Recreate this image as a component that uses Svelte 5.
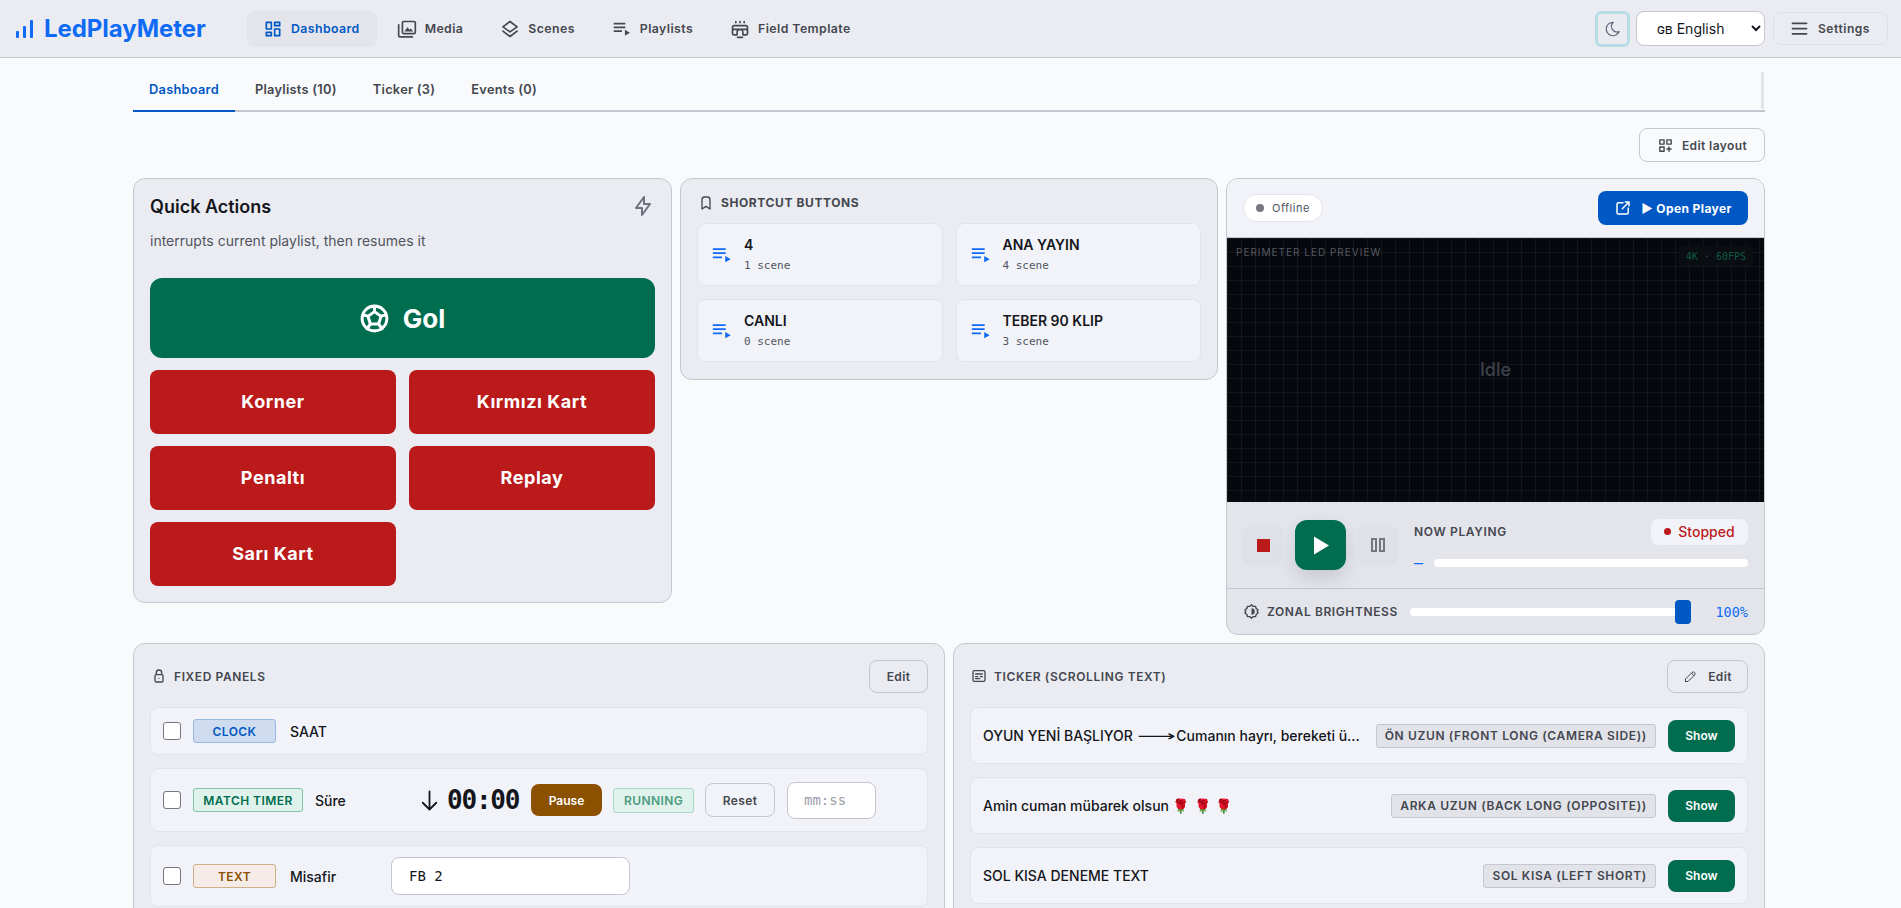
<script>
  const nav = [
    { label: 'Dashboard', icon: 'dash', active: true },
    { label: 'Media', icon: 'media' },
    { label: 'Scenes', icon: 'scenes' },
    { label: 'Playlists', icon: 'list' },
    { label: 'Field Template', icon: 'field' }
  ];
  const tabs = ['Dashboard', 'Playlists (10)', 'Ticker (3)', 'Events (0)'];
  const shortcuts = [
    { t: '4', s: '1 scene' },
    { t: 'ANA YAYIN', s: '4 scene' },
    { t: 'CANLI', s: '0 scene' },
    { t: 'TEBER 90 KLIP', s: '3 scene' }
  ];
  const reds = ['Korner', 'Kırmızı Kart', 'Penaltı', 'Replay', 'Sarı Kart'];
  const tickers = [
    { t: 'OYUN YENİ BAŞLIYOR', arrow: '⟶', rest: 'Cumanın hayrı, bereketi üzerimize olsun, hayırlı cumalar dileriz', b: 'ÖN UZUN (FRONT LONG (CAMERA SIDE))' },
    { t: 'Amin cuman mübarek olsun 🌹 🌹 🌹', b: 'ARKA UZUN (BACK LONG (OPPOSITE))' },
    { t: 'SOL KISA DENEME TEXT', b: 'SOL KISA (LEFT SHORT)' }
  ];
</script>

{#snippet icon(name)}
  <svg class="ic" viewBox="0 0 24 24" fill="none" stroke="currentColor" stroke-width="2" stroke-linecap="round" stroke-linejoin="round">
    {#if name === 'dash'}
      <path d="M4 4h6v8h-6z M4 16h6v4h-6z M14 12h6v8h-6z M14 4h6v4h-6z" />
    {:else if name === 'media'}
      <path d="M6.500 4.500a1.500 1.500 0 0 1 1.500 -1.500h12.500a1.500 1.500 0 0 1 1.500 1.500v11.500a1.500 1.500 0 0 1 -1.500 1.500h-12.500a1.500 1.500 0 0 1 -1.500 -1.500z" />
      <path d="M2 7v13a1.500 1.500 0 0 0 1.500 1.500h15" />
      <path fill="currentColor" stroke="none" d="M9 15l3.500 -5l2.500 3l1.500 -1.500l3 3.500z" />
    {:else if name === 'scenes'}
      <path d="M12 3l8.500 6.500l-8.500 6l-8.500 -6z M3.500 14.500l8.500 6.500l8.500 -6.500" />
    {:else if name === 'list'}
      <path fill="currentColor" stroke="none" d="M2 4.500h14v2H2z M2 9h14v2H2z M2 13.500h10v2H2z M15.500 13v7l6 -3.500z" />
    {:else if name === 'field'}
      <path d="M5 8h14a2 2 0 0 1 2 2v7a2 2 0 0 1 -2 2h-3.500v-3a3.500 3.500 0 0 0 -7 0v3h-3.500a2 2 0 0 1 -2 -2v-7a2 2 0 0 1 2 -2z M3 12.500h18 M7 3v1.500 M12 3v1.500 M17 3v1.500 M9 22h6" />
    {:else if name === 'moon'}
      <path d="M12 3c.132 0 .263 0 .393 0a7.500 7.500 0 0 0 7.920 12.446a9 9 0 1 1 -8.313 -12.454z" />
    {:else if name === 'menu'}
      <path d="M4 6h16 M4 12h16 M4 18h16" />
    {:else if name === 'layout'}
      <path d="M4 4h6v6h-6z M14 4h6v6h-6z M4 14h6v6h-6z M14 17h6 M17 14v6" />
    {:else if name === 'bolt'}
      <path d="M13 3v7h6l-8 11v-7h-6l8 -11" />
    {:else if name === 'ball'}
      <path d="M12 12m-9 0a9 9 0 1 0 18 0a9 9 0 1 0 -18 0 M12 7l4.760 3.450l-1.760 5.550h-6l-1.760 -5.550z M12 7v-4 M16.760 10.450l3.730 -1.350 M15 16l2.500 3.500 M9 16l-2.500 3.500 M7.240 10.450l-3.730 -1.350" />
    {:else if name === 'bookmark'}
      <path d="M18 7v14l-6 -4l-6 4v-14a4 4 0 0 1 4 -4h4a4 4 0 0 1 4 4z" />
    {:else if name === 'external'}
      <path d="M12 5h-6a2 2 0 0 0 -2 2v11a2 2 0 0 0 2 2h11a2 2 0 0 0 2 -2v-6 M11 13l9 -9 M15 4h5v5" />
    {:else if name === 'bright'}
      <path d="M12 2.500l2.500 2.300h3.200l.9 3l2.600 2.200l-1.100 2l1.100 2l-2.600 2.200l-.9 3h-3.200l-2.500 2.300l-2.500 -2.300h-3.200l-.9 -3l-2.600 -2.200l1.100 -2l-1.100 -2l2.600 -2.200l.9 -3h3.200z" />
      <path fill="currentColor" stroke="none" d="M12 7.500a4.500 4.500 0 0 1 0 9z" />
    {:else if name === 'lock'}
      <path d="M6 12a2 2 0 0 1 2 -2h8a2 2 0 0 1 2 2v7a2 2 0 0 1 -2 2h-8a2 2 0 0 1 -2 -2z M8 10v-3a4 4 0 1 1 8 0v3 M12 15.500v.01" />
    {:else if name === 'ticker'}
      <path d="M3 6a2 2 0 0 1 2 -2h14a2 2 0 0 1 2 2v12a2 2 0 0 1 -2 2h-14a2 2 0 0 1 -2 -2z M7 9h10 M7 13h3 M14 13h3 M7 16h6" />
    {:else if name === 'pencil'}
      <path d="M4 20h4l10.500 -10.500a2.800 2.800 0 0 0 -4 -4l-10.500 10.500v4 M13.500 6.500l4 4" />
    {:else if name === 'down'}
      <path d="M12 4v16 M6 14l6 6l6 -6" />
    {/if}
  </svg>
{/snippet}

<div class="app">
  <header class="top">
    <div class="logo">
      <svg class="logo-ic" viewBox="0 0 20 20" fill="currentColor"><rect x="1" y="12" width="3" height="7" rx="1"/><rect x="8" y="7" width="3" height="12" rx="1"/><rect x="15" y="1" width="3" height="18" rx="1"/></svg>
      <span>LedPlayMeter</span>
    </div>
    <nav class="nav">
      {#each nav as n}
        <button class="nav-item" class:active={n.active}>{@render icon(n.icon)}<span>{n.label}</span></button>
      {/each}
    </nav>
    <div class="top-right">
      <button class="moon">{@render icon('moon')}</button>
      <select class="lang"><option>ɢʙ English</option></select>
      <button class="settings">{@render icon('menu')}<span>Settings</span></button>
    </div>
  </header>

  <main class="page">
    <div class="tabs">
      {#each tabs as t, i}
        <button class="tab" class:on={i === 0}>{t}</button>
      {/each}
      <span class="thumb"></span>
    </div>
    <div class="toolbar">
      <button class="btn-outline layout-btn">{@render icon('layout')}<span>Edit layout</span></button>
    </div>

    <div class="row-top">
      <section class="card quick">
        <div class="quick-head">
          <h2>Quick Actions</h2>
          {@render icon('bolt')}
        </div>
        <p class="quick-sub">interrupts current playlist, then resumes it</p>
        <button class="gol">{@render icon('ball')}<span>Gol</span></button>
        <div class="red-grid">
          {#each reds as r}
            <button class="red">{r}</button>
          {/each}
        </div>
      </section>

      <section class="card shortcuts">
        <div class="heading">{@render icon('bookmark')}<span>SHORTCUT BUTTONS</span></div>
        <div class="sc-grid">
          {#each shortcuts as s}
            <button class="sc">
              {@render icon('list')}
              <span class="sc-text"><b>{s.t}</b><small>{s.s}</small></span>
            </button>
          {/each}
        </div>
      </section>

      <section class="card player">
        <div class="p-head">
          <span class="offline"><i></i>Offline</span>
          <button class="open">{@render icon('external')}<span>▶ Open Player</span></button>
        </div>
        <div class="preview">
          <span class="pv-label">PERIMETER LED PREVIEW</span>
          <span class="pv-chip">4K · 60FPS</span>
          <span class="idle">Idle</span>
        </div>
        <div class="controls">
          <button class="ctl"><i class="stop"></i></button>
          <button class="play" aria-label="Play"><svg viewBox="0 0 16 18" fill="#fff"><path d="M1 0l15 9l-15 9z"/></svg></button>
          <button class="ctl"><i class="pause"></i><i class="pause"></i></button>
          <div class="now">
            <div class="now-top">
              <span class="now-label">NOW PLAYING</span>
              <span class="stopped"><i></i>Stopped</span>
            </div>
            <div class="now-bar"><span class="dash">—</span><span class="bar"></span></div>
          </div>
        </div>
        <div class="bright">
          {@render icon('bright')}
          <span class="br-label">ZONAL BRIGHTNESS</span>
          <span class="track"><i></i></span>
          <span class="pct">100%</span>
        </div>
      </section>
    </div>

    <div class="row-bottom">
      <section class="card panel">
        <div class="panel-head">
          <div class="heading">{@render icon('lock')}<span>FIXED PANELS</span></div>
          <button class="btn-outline edit"><span>Edit</span></button>
        </div>
        <div class="rows">
          <div class="rw r1">
            <span class="check"></span>
            <span class="badge clock">CLOCK</span>
            <span class="name">SAAT</span>
          </div>
          <div class="rw r2">
            <span class="check"></span>
            <span class="badge timer">MATCH TIMER</span>
            <span class="name">Süre</span>
            <span class="down">{@render icon('down')}</span>
            <span class="time">00:00</span>
            <button class="pausebtn">Pause</button>
            <span class="running">RUNNING</span>
            <button class="btn-outline reset">Reset</button>
            <span class="input mmss">mm:ss</span>
          </div>
          <div class="rw r3">
            <span class="check"></span>
            <span class="badge text">TEXT</span>
            <span class="name">Misafir</span>
            <span class="input fb">FB 2</span>
          </div>
        </div>
      </section>

      <section class="card panel tk-panel">
        <div class="panel-head">
          <div class="heading">{@render icon('ticker')}<span>TICKER (SCROLLING TEXT)</span></div>
          <button class="btn-outline edit">{@render icon('pencil')}<span>Edit</span></button>
        </div>
        <div class="rows">
          {#each tickers as t}
            <div class="rw tick">
              <span class="tk-text">{t.t}{#if t.arrow}{' '}<span class="arrow"><span>{t.arrow}</span></span>{' '}{t.rest}{/if}</span>
              <span class="tk-badge">{t.b}</span>
              <button class="show">Show</button>
            </div>
          {/each}
        </div>
      </section>
    </div>
  </main>
</div>

<style>
  :global(body) { margin: 0; background: #f9fafc; }
  * { box-sizing: border-box; }
  button { font-family: inherit; cursor: pointer; margin: 0; }
  .app { height: 908px; overflow: hidden; font-family: Inter, "Liberation Sans", sans-serif; color: #14161c; background: #f9fafc; }
  .ic { width: 18px; height: 18px; flex: none; }

  .top { height: 58px; background: #ebecf2; border-bottom: 1px solid #c5c6d0; display: flex; align-items: center; padding: 0 13px 0 15px; }
  .logo { display: flex; align-items: center; gap: 9px; width: 231px; color: #0f6bf5; font-size: 24px; font-weight: 700; letter-spacing: -.05px; }
  .logo-ic { width: 20px; height: 20px; }
  .nav { display: flex; gap: 4px; margin-left: 1px; }
  .nav-item { height: 36px; padding: 0 17px 0 16px; border: 0; border-radius: 8px; background: transparent; display: flex; align-items: center; gap: 8px; font-size: 12.300px; font-weight: 600; letter-spacing: .42px; color: #44474f; }
  .nav-item.active { background: #e4e5eb; color: #0058c4; }
  .nav-item .ic { width: 20px; height: 20px; stroke-width: 2; }
  .top-right { margin-left: auto; display: flex; align-items: center; gap: 6px; }
  .moon { width: 35px; height: 36px; border: 3px solid #b8dde8; border-radius: 6px; background: #e9ebf1; color: #5c6478; display: grid; place-items: center; padding: 0; }
  .moon .ic { stroke-width: 1.500; }
  .lang { width: 129px; height: 35px; background: #fff; border: 1px solid #c5c6d0; border-radius: 8px; font: 400 14px Inter, "DejaVu Sans", sans-serif; color: #14161c; padding: 0 8px 0 16px; margin-right: 2px; }
  .settings { width: 115px; height: 33px; border: 1px solid #e0e1e8; border-radius: 8px; background: #ebecf2; display: flex; align-items: center; gap: 8px; font-size: 12px; font-weight: 600; letter-spacing: .55px; color: #44474f; padding: 0 0 0 15px; }
  .settings .ic { width: 21px; height: 21px; }

  .page { margin-left: 133px; width: 1632px; }
  .tabs { position: relative; height: 54px; padding-top: 10px; border-bottom: 2px solid #c5c6d0; display: flex; gap: 4px; }
  .tab { height: 44px; padding: 0 16px; border: 0; margin-bottom: -2px; border-bottom: 2px solid transparent; background: transparent; font-size: 12.800px; font-weight: 600; letter-spacing: .27px; color: #44474f; }
  .tab.on { color: #0058c4; border-bottom-color: #0058c4; }
  .thumb { position: absolute; right: 1px; top: 14px; width: 3px; height: 37px; background: #e1e2e8; }
  .toolbar { display: flex; justify-content: flex-end; padding: 16px 0; }
  .btn-outline { background: transparent; border: 1px solid #c5c6d0; border-radius: 8px; display: inline-flex; align-items: center; justify-content: center; gap: 8px; font-size: 12px; font-weight: 600; letter-spacing: .4px; color: #44474f; padding: 0; }
  .layout-btn { width: 126px; height: 34px; }
  .layout-btn .ic { width: 17px; height: 17px; stroke-width: 2; }

  .card { border: 1px solid #c5c6d0; border-radius: 12px; background: #ebecf2; min-width: 0; }
  .row-top { display: grid; grid-template-columns: 539px 538px minmax(0, 1fr); gap: 8px; align-items: start; }
  .quick { padding: 16px; height: 425px; display: flex; flex-direction: column; }
  .quick-head { display: flex; align-items: center; justify-content: space-between; height: 24px; margin-top: -1px; }
  .quick-head h2 { margin: 0; font-size: 18px; font-weight: 600; color: #14161c; }
  .quick-head .ic { width: 24px; height: 24px; color: #6d7480; stroke-width: 2; }
  .quick-sub { margin: 11px 0 0; font-size: 14px; line-height: 24px; color: #50545f; }
  .gol { margin-top: 25px; height: 80px; border: 0; border-radius: 12px; background: #006d4e; color: #fff; display: flex; align-items: center; justify-content: center; gap: 12px; font-size: 26px; font-weight: 700; padding-right: 8px; }
  .gol .ic { width: 33px; height: 33px; stroke-width: 2.200; }
  .red-grid { margin-top: 12px; display: grid; grid-template-columns: 1fr 1fr; gap: 12px 13px; }
  .red { height: 64px; border: 0; border-radius: 8px; background: #ba1a1a; color: #fff; font-size: 18px; font-weight: 700; letter-spacing: .55px; padding: 0 0 2px; }

  .heading { display: flex; align-items: center; gap: 7px; font-size: 12px; font-weight: 700; letter-spacing: .6px; color: #44474f; }
  .heading .ic { width: 16px; height: 16px; stroke-width: 2; }
  .shortcuts { padding: 15px 16px 17px; }
  .shortcuts .heading { height: 17px; margin-bottom: 12px; padding-left: 1px; }
  .sc-grid { display: grid; grid-template-columns: 1fr 1fr; gap: 13px; }
  .sc { height: 63px; background: #f2f3f8; border: 1px solid #e3e4ea; border-radius: 8px; padding: 1px 13px 0; display: flex; align-items: center; gap: 11px; text-align: left; color: #14161c; }
  .sc .ic { color: #0f6bf5; width: 22px; height: 22px; }
  .sc-text { display: flex; flex-direction: column; gap: 4px; }
  .sc-text b { font-size: 14px; font-weight: 600; line-height: 18px; }
  .sc-text small { font: 400 11px "DejaVu Sans Mono", monospace; color: #50545f; line-height: 16px; }

  .player { overflow: hidden; background: #e4e5eb; }
  .p-head { height: 59px; background: #f2f3f8; border-bottom: 1px solid #c5c6d0; display: flex; align-items: center; justify-content: space-between; padding: 0 16px; }
  .offline { height: 28px; padding: 0 12px; background: #fff; border: 1px solid #e3e4ea; border-radius: 14px; display: flex; align-items: center; gap: 8px; font-size: 11px; letter-spacing: .5px; color: #50545f; }
  .offline i { width: 8px; height: 8px; border-radius: 50%; background: #74777f; }
  .open { width: 150px; height: 34px; border: 0; border-radius: 8px; background: #0058c4; color: #fff; display: flex; align-items: center; justify-content: center; gap: 9px; font-size: 12px; font-weight: 700; letter-spacing: .4px; padding: 0; }
  .open .ic { width: 18px; height: 18px; }
  .preview { position: relative; height: 264px; padding-bottom: 2px; background-color: #05080d; background-image: linear-gradient(rgba(255,255,255,.05) 1px, transparent 1px), linear-gradient(90deg, rgba(255,255,255,.05) 1px, transparent 1px); background-size: 14px 14px; display: grid; place-items: center; }
  .pv-label { position: absolute; left: 9px; top: 8px; font-size: 10px; letter-spacing: 1px; color: #555963; }
  .pv-chip { position: absolute; right: 10px; top: 8px; height: 20px; padding: 0 8px; display: flex; align-items: center; border-radius: 5px; background: #0a0d11; font: 400 10px "DejaVu Sans Mono", monospace; color: #0b5a42; }
  .idle { font-size: 18px; font-weight: 500; color: #3d414b; }
  .controls { height: 87px; border-bottom: 1px solid #c5c6d0; display: flex; align-items: center; padding: 0 16px; }
  .ctl { width: 40px; height: 40px; border: 0; border-radius: 8px; background: #e0e1e8; display: flex; align-items: center; justify-content: center; gap: 2px; padding: 0; }
  .stop { width: 13px; height: 13px; background: #ba1a1a; }
  .pause { width: 6px; height: 14px; border: 2px solid #74777f; }
  .play { width: 51px; height: 50px; margin: 0 12px; border: 0; border-radius: 12px; background: #006d4e; box-shadow: 0 8px 18px rgba(0,0,0,.12); display: grid; place-items: center; padding: 0; }
  .play svg { width: 16px; height: 19px; }
  .now { flex: 1; margin: 0 0 5px 16px; }
  .now-top { display: flex; align-items: center; justify-content: space-between; height: 26px; }
  .now-label { font-size: 12px; font-weight: 600; letter-spacing: .65px; color: #44474f; }
  .stopped { width: 97px; height: 26px; background: #f2f3f8; border-radius: 8px; display: flex; align-items: center; justify-content: center; gap: 7px; font-size: 14px; font-weight: 500; color: #ba1a1a; }
  .stopped i { width: 7px; height: 7px; border-radius: 50%; background: #ba1a1a; }
  .now-bar { display: flex; align-items: center; gap: 11px; margin-top: 14px; height: 8px; }
  .dash { font: 400 15px/8px "DejaVu Sans Mono", monospace; color: #0f6bf5; }
  .bar { flex: 1; height: 8px; border-radius: 4px; background: #fff; }
  .bright { height: 45px; display: flex; align-items: center; padding: 0 16px; }
  .bright .ic { width: 17px; height: 17px; color: #44474f; stroke-width: 2; }
  .br-label { margin-left: 7px; font-size: 12px; font-weight: 600; letter-spacing: .6px; color: #44474f; }
  .track { position: relative; margin-left: 12px; width: 281px; height: 8px; border-radius: 4px; background: #fff; }
  .track i { position: absolute; right: 0; top: -8px; width: 16px; height: 24px; border-radius: 4px; background: #0058c4; }
  .pct { margin-left: auto; font: 400 13.500px "DejaVu Sans Mono", monospace; color: #0f6bf5; }

  .row-bottom { margin-top: 8px; display: grid; grid-template-columns: 812px minmax(0, 1fr); gap: 8px; }
  .panel { padding: 15px 16px 16px; height: 400px; min-width: 0; }
  .panel-head { display: flex; align-items: center; justify-content: space-between; height: 34px; margin-bottom: 14px; }
  .panel-head .heading { font-weight: 600; letter-spacing: .6px; padding-left: 1px; }
  .edit { height: 33px; width: 59px; }
  .edit .ic { width: 15px; height: 15px; stroke-width: 1.600; }
  .tk-panel .edit { width: 81px; gap: 10px; }
  .rows { display: flex; flex-direction: column; gap: 13px; }
  .rw { background: #f2f3f8; border: 1px solid #e3e4ea; border-radius: 8px; display: flex; align-items: center; padding: 0 12px; min-width: 0; }
  .r1 { height: 48px; }
  .r2 { height: 64px; }
  .r3 { height: 62px; }
  .check { width: 18px; height: 18px; flex: none; background: #fff; border: 1px solid #74777f; border-radius: 3px; }
  .badge { height: 24px; margin-left: 12px; border-radius: 3px; border: 1px solid; display: grid; place-items: center; font-size: 12px; font-weight: 600; letter-spacing: .45px; flex: none; }
  .clock { width: 83px; background: #cfdcef; border-color: #9ab8e4; color: #0058c4; }
  .timer { width: 110px; background: #dff3ec; border-color: #7fc5ae; color: #006d4e; }
  .text { width: 83px; background: #f5ece7; border-color: #cfae8a; color: #8b5000; }
  .name { margin-left: 14px; font-size: 14px; font-weight: 500; }
  .r2 .name { width: 89px; margin-left: 12px; }
  .r3 .name { width: 89px; }
  .down { width: 16px; margin-left: 12px; display: grid; place-items: center; margin-right: 15px; }
  .down .ic { width: 27px; height: 27px; stroke-width: 1.600; }
  .time { font: 700 26px "DejaVu Sans Mono", monospace; letter-spacing: -1.200px; color: #14161c; width: 72px; }
  .pausebtn { width: 71px; height: 32px; margin-left: 12px; border: 0; border-radius: 8px; background: #8b5000; color: #fff; font-size: 12px; font-weight: 600; padding: 0; }
  .running { width: 81px; height: 25px; margin-left: 11px; display: grid; place-items: center; background: #dff3ec; border: 1px solid #a9d8c8; border-radius: 3px; font-size: 12px; font-weight: 600; letter-spacing: .4px; color: #4f9a82; }
  .reset { width: 70px; height: 34px; margin-left: 11px; }
  .input { background: #fff; border: 1px solid #c5c6d0; border-radius: 8px; display: flex; align-items: center; font: 400 14px "DejaVu Sans Mono", monospace; }
  .mmss { width: 89px; height: 37px; margin-left: 12px; padding-left: 16px; color: #9a9ca5; }
  .fb { width: 239px; height: 38px; margin-left: 12px; padding-left: 17px; color: #14161c; }

  .tick { height: 57px; }
  .tk-text { flex: 1; min-width: 0; white-space: nowrap; overflow: hidden; text-overflow: ellipsis; font-size: 14px; font-weight: 500; margin-right: 13px; font-family: Inter, "DejaVu Sans", "Noto Color Emoji", sans-serif; }
  .arrow { display: inline-block; width: 36px; line-height: 0; font-family: "DejaVu Sans", sans-serif; font-size: 15px; font-weight: 400; }
  .arrow span { display: inline-block; transform: scaleX(1.8); transform-origin: left center; }
  .tk-badge { flex: none; height: 24px; padding: 0 8px; display: flex; align-items: center; background: #e2e3e9; border: 1px solid #c5c6d0; border-radius: 3px; font-size: 12px; font-weight: 600; letter-spacing: .65px; color: #44474f; white-space: nowrap; }
  .show { width: 67px; height: 32px; margin-left: 12px; border: 0; border-radius: 8px; background: #006d4e; color: #fff; font-size: 12px; font-weight: 600; padding: 0; flex: none; }
</style>
